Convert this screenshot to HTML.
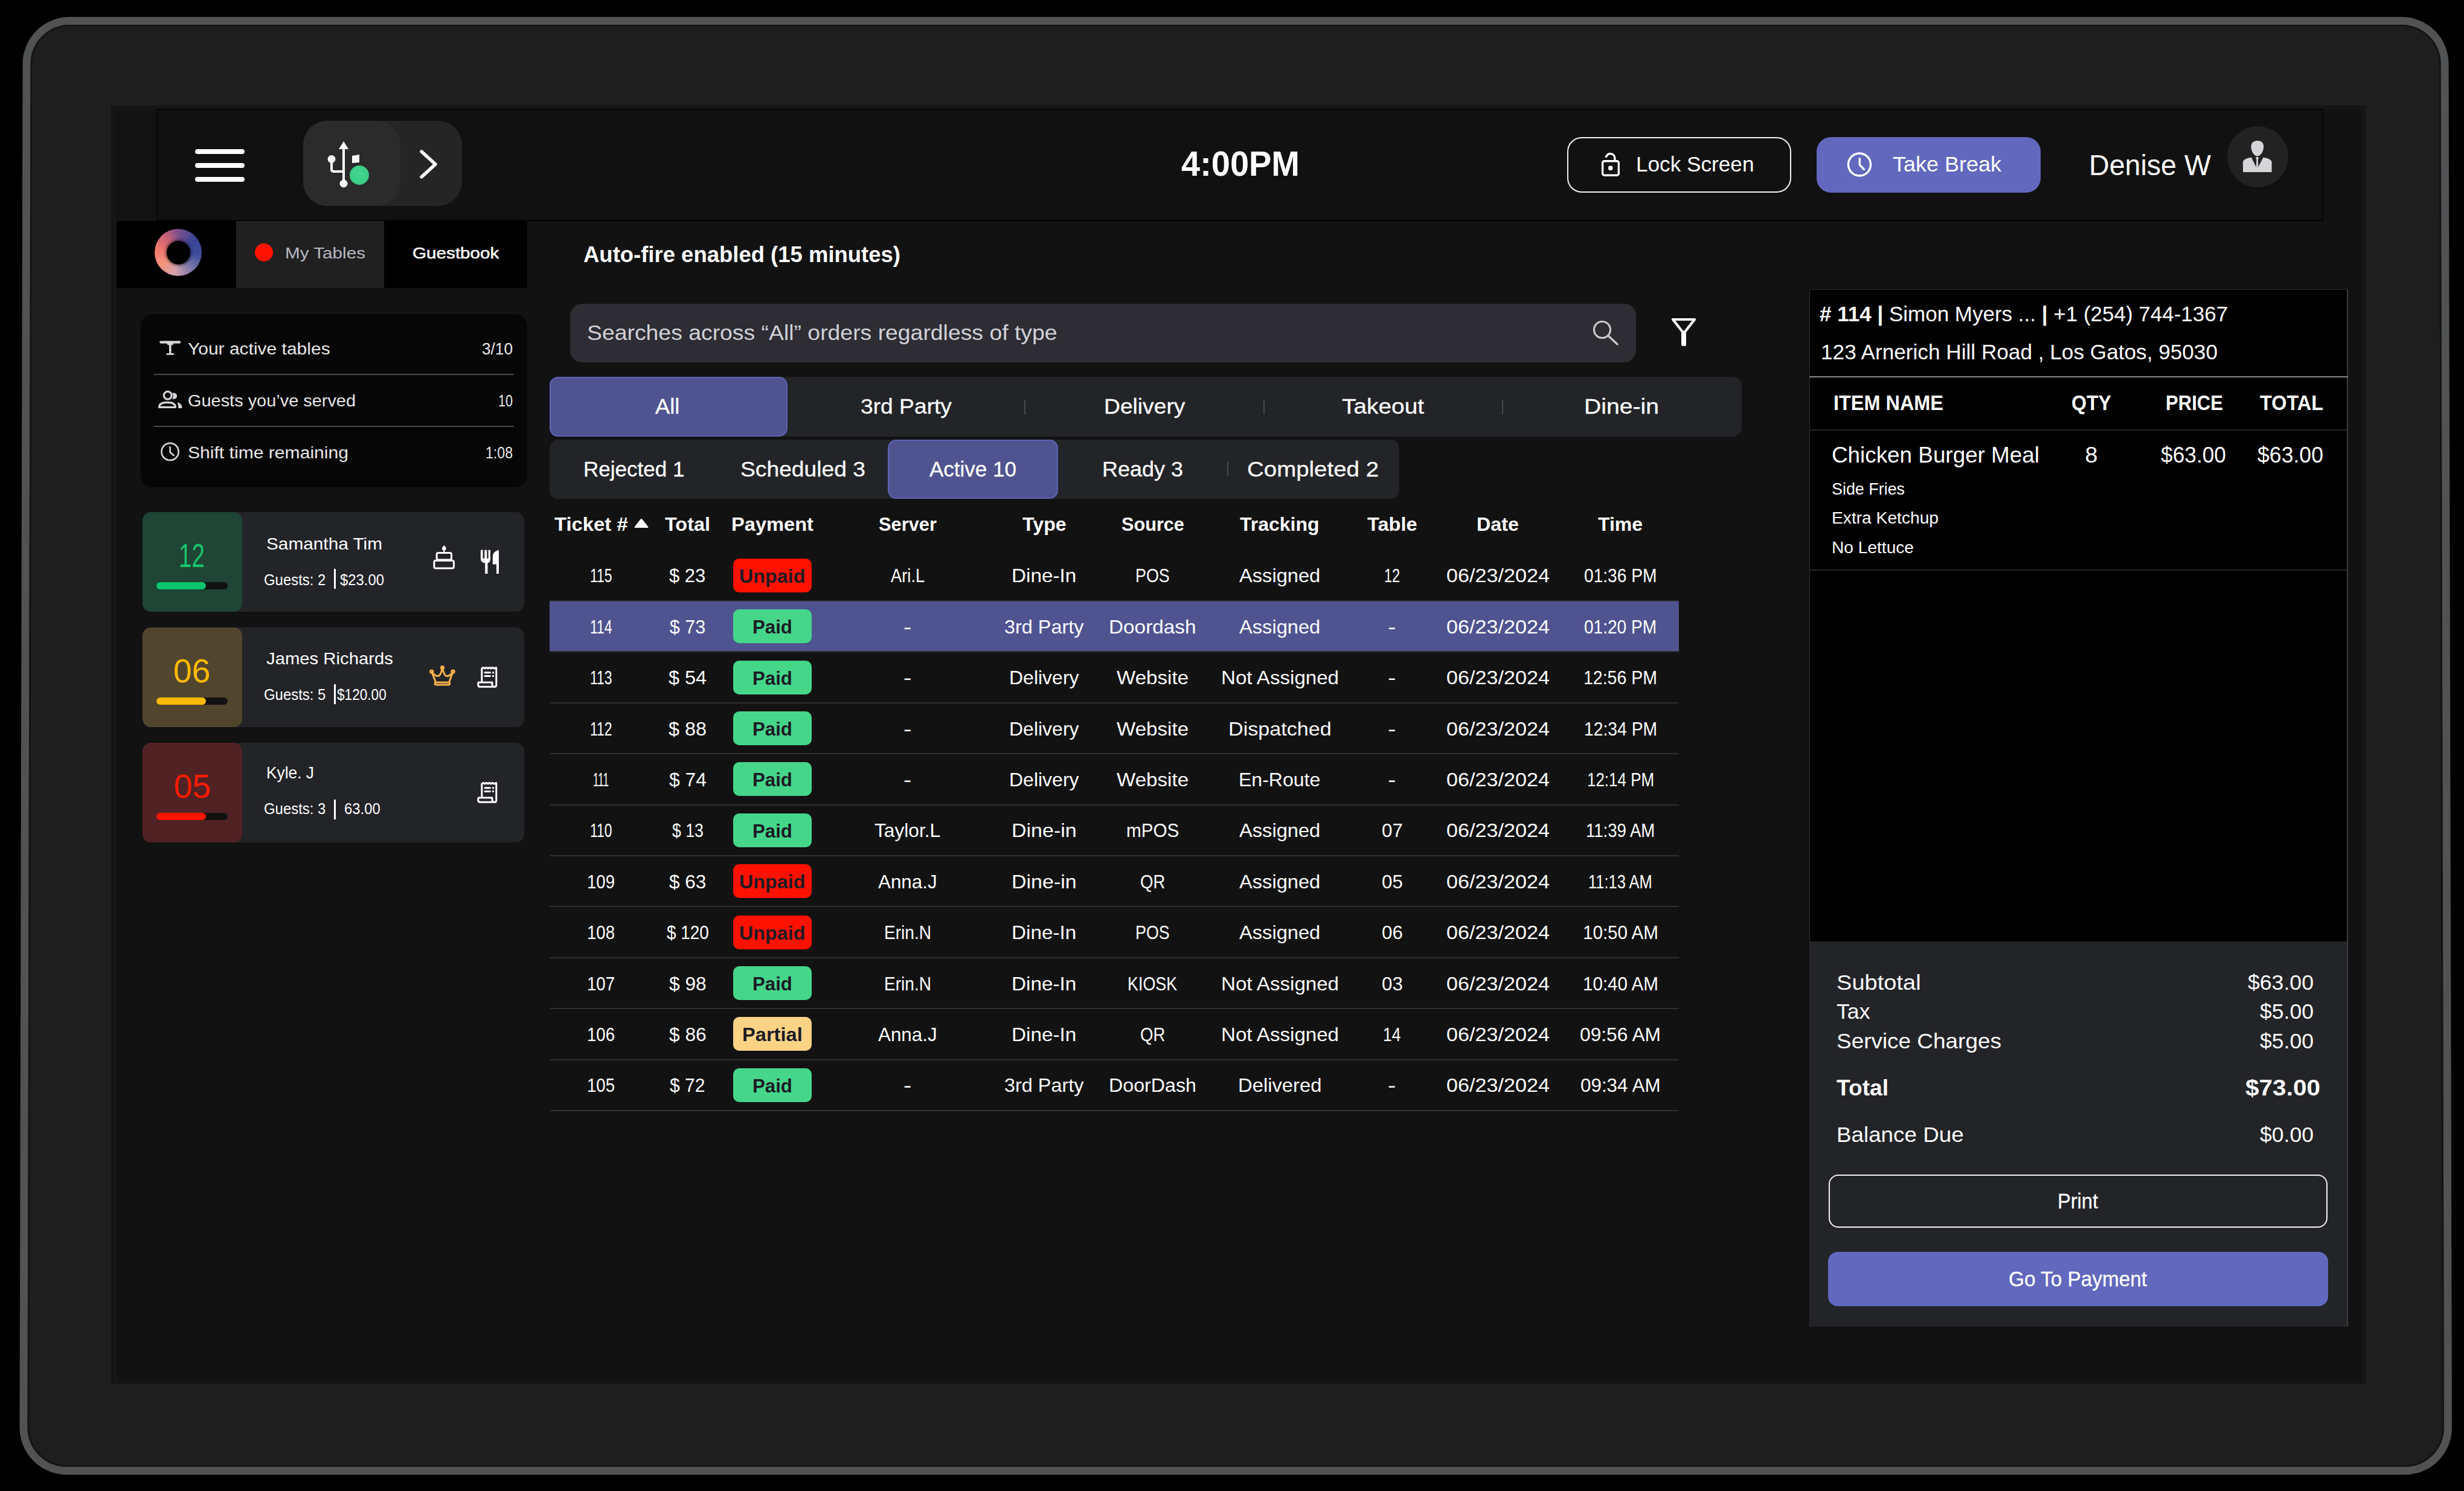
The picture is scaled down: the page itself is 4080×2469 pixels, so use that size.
<!DOCTYPE html>
<html><head><meta charset="utf-8"><title>Orders</title><style>*{margin:0;padding:0}
html,body{width:4080px;height:2469px;overflow:hidden;background:#000;font-family:"Liberation Sans",sans-serif}
.b{position:absolute}
.t{position:absolute;white-space:nowrap;line-height:1;transform-origin:0 0}
</style></head><body>
<svg class="b" style="left:0px;top:0px;" width="4080" height="2469" viewBox="0 0 4080 2469"><path d="M115.5 34.5 L3976.6 34.5 A71.5 71.5 0 0 1 4048.1 106.0 L4053.5 2364.0 A71.5 71.5 0 0 1 3982.0 2435.5 L110.5 2435.5 A71.5 71.5 0 0 1 39.0 2364.0 L44.0 106.0 A71.5 71.5 0 0 1 115.5 34.5 Z" fill="#1e1e1e" stroke="#505254" stroke-width="13"/><path d="M115.5 42.5 L3976.6 42.5 A63.5 63.5 0 0 1 4040.1 106.0 L4045.5 2364.0 A63.5 63.5 0 0 1 3982.0 2427.5 L110.5 2427.5 A63.5 63.5 0 0 1 47.0 2364.0 L52.0 106.0 A63.5 63.5 0 0 1 115.5 42.5 Z" fill="none" stroke="#151515" stroke-width="3"/></svg>
<div class="b" style="left:184px;top:175px;width:3733px;height:2117px;background:#141414;border-radius:0px;"></div>
<div class="b" style="left:190px;top:179px;width:3723px;height:2108px;background:#1b1b1b;border-radius:0px;"></div>
<div class="b" style="left:192px;top:180px;width:3720px;height:2106px;background:#121212;border-radius:0px;"></div>
<div class="b" style="left:191px;top:180px;width:69px;height:185px;background:#131313;border-radius:0px;"></div>
<div class="b" style="left:259px;top:180px;width:3588px;height:186px;background:#111111;border-radius:0px;box-sizing:border-box;border:2px solid #050505;"></div>
<div class="b" style="left:323px;top:247px;width:82px;height:8px;background:#fff;border-radius:4px;"></div>
<div class="b" style="left:323px;top:270px;width:82px;height:8px;background:#fff;border-radius:4px;"></div>
<div class="b" style="left:323px;top:293px;width:82px;height:8px;background:#fff;border-radius:4px;"></div>
<div class="b" style="left:502px;top:200px;width:263px;height:141px;background:#252525;border-radius:40px;"></div>
<div class="b" style="left:502px;top:200px;width:161px;height:141px;background:#2b2b2b;border-radius:40px;"></div>
<svg class="b" style="left:540px;top:228px;" width="75" height="92" viewBox="0 0 75 92"><path d="M29 11 L29 74" stroke="#fff" stroke-width="4" fill="none"/><path d="M29 6 L21 19 L37 19 Z" fill="#fff"/><circle cx="29" cy="76" r="6.5" fill="#fff"/><circle cx="9" cy="35.5" r="6.5" fill="#fff"/><path d="M9 39 L9 52 Q9 56 13 56 L29 56" stroke="#fff" stroke-width="4" fill="none"/><path d="M43 30 L55 28 L55 41 L43 42 Z" fill="#fff"/></svg>
<div class="b" style="left:579px;top:274px;width:32px;height:32px;border-radius:50%;background:radial-gradient(circle at 50% 45%,#44d692 0,#3ccf88 60%,#2fae73 100%);"></div>
<svg class="b" style="left:690px;top:244px;" width="40" height="56" viewBox="0 0 40 56"><path d="M8 7 L31 28 L8 49" stroke="#fff" stroke-width="5.5" fill="none" stroke-linecap="round" stroke-linejoin="round"/></svg>
<div class="t" style="left:1955.5px;top:241.7px;font-size:58px;color:#fff;font-weight:700;transform:scaleX(0.9650);">4:00PM</div>
<div class="b" style="left:2595px;top:227px;width:371px;height:92px;background:transparent;border-radius:24px;box-sizing:border-box;border:2px solid #f4f4f4;"></div>
<svg class="b" style="left:2648px;top:250px;" width="38" height="44" viewBox="0 0 38 44"><path d="M25.8 16 L25.8 11 A7.3 7.3 0 0 0 11.6 9.6" stroke="#fff" stroke-width="3.4" fill="none" stroke-linecap="round"/><rect x="5.6" y="16.7" width="26.7" height="23.5" rx="3" stroke="#fff" stroke-width="3.4" fill="none"/><circle cx="18.8" cy="28.4" r="3.8" fill="#fff"/></svg>
<div class="t" style="left:2709px;top:254.25px;font-size:35px;color:#fff;transform:scaleX(1.0046);">Lock Screen</div>
<div class="b" style="left:3008px;top:227px;width:371px;height:92px;background:#6168be;border-radius:24px;"></div>
<svg class="b" style="left:3056px;top:249px;" width="46" height="47" viewBox="0 0 46 47"><circle cx="23" cy="23.5" r="18.5" stroke="#fff" stroke-width="3.4" fill="none"/><path d="M23.3 13.7 L23.3 24 L30.5 31.5" stroke="#fff" stroke-width="3.4" fill="none" stroke-linecap="round"/></svg>
<div class="t" style="left:3134px;top:254.25px;font-size:35px;color:#fff;transform:scaleX(1.0274);">Take Break</div>
<div class="t" style="left:3459px;top:249.7px;font-size:48px;color:#fff;transform:scaleX(0.9707);">Denise W</div>
<div class="b" style="left:3688px;top:209px;width:101px;height:101px;border-radius:50%;background:#222222;"></div>
<svg class="b" style="left:3712px;top:232px;" width="52" height="56" viewBox="0 0 52 56"><path d="M26 1.1 C32.5 1.1 36.2 4.5 36.2 11 C36.2 19 31 26.5 25.8 26.5 C20.5 26.5 15.5 19 15.5 11 C15.5 4.5 19.5 1.1 26 1.1 Z" fill="#d4d5d9"/><path d="M2 53 L2 36.3 Q3 30.5 15.9 28.8 L23.7 44.3 L27.4 44.3 L35.5 28.8 Q48.6 30.5 49.6 36.3 L49.6 53 Z" fill="#d4d5d9"/><circle cx="25.6" cy="30.1" r="2.3" fill="#d4d5d9"/><path d="M24.4 31.5 L26.8 31.5 L27.4 44.3 L23.8 44.3 Z" fill="#d4d5d9"/></svg>
<div class="b" style="left:193px;top:366px;width:198px;height:111px;background:#000;border-radius:0px;"></div>
<div class="b" style="left:256px;top:379px;width:78px;height:78px;border-radius:50%;background:conic-gradient(from 0deg,#7b4f8c 0deg,#3c4496 50deg,#3d4c9c 95deg,#7a78ac 140deg,#d7a3ab 190deg,#f6927c 235deg,#f0786c 280deg,#c76078 325deg,#7b4f8c 360deg);"></div>
<div class="b" style="left:275.5px;top:398.5px;width:39px;height:39px;border-radius:50%;background:#000;box-shadow:0 0 4px 2px rgba(0,0,0,0.5);"></div>
<div class="b" style="left:391px;top:366px;width:245px;height:111px;background:#202020;border-radius:0px;"></div>
<div class="b" style="left:422px;top:403px;width:30px;height:30px;border-radius:50%;background:#ff1100;"></div>
<div class="t" style="left:472px;top:405.9px;font-size:26px;color:#b9b9c4;transform:scaleX(1.1407);">My Tables</div>
<div class="b" style="left:636px;top:366px;width:237px;height:111px;background:#000;border-radius:0px;"></div>
<div class="t" style="left:683px;top:406.23px;font-size:26.2px;color:#fff;transform:scaleX(1.1325);-webkit-text-stroke:0.5px #fff;">Guestbook</div>
<div class="b" style="left:233px;top:520px;width:640px;height:287px;background:#060606;border-radius:20px;"></div>
<svg class="b" style="left:262px;top:562px;" width="39" height="28" viewBox="0 0 39 28"><path d="M4.3 4.7 L35.2 4.7" stroke="#d6d6da" stroke-width="4.2" stroke-linecap="round"/><path d="M13.5 6 L26 6 L23.5 9.5 L16 9.5 Z" fill="#d6d6da"/><path d="M19.8 7 L19.8 24" stroke="#d6d6da" stroke-width="3.6"/><path d="M14.8 24.4 L24.8 24.4" stroke="#d6d6da" stroke-width="2.8" stroke-linecap="round"/></svg>
<div class="t" style="left:311px;top:565.05px;font-size:27px;color:#e8e8e8;transform:scaleX(1.1108);">Your active tables</div>
<div class="t" style="left:798px;top:565.05px;font-size:27px;color:#e8e8e8;transform:scaleX(0.9714);">3/10</div>
<div class="b" style="left:255px;top:619px;width:596px;height:2px;background:#4a4a4e;border-radius:0px;"></div>
<svg class="b" style="left:260px;top:646px;" width="43" height="32" viewBox="0 0 43 32"><circle cx="17.7" cy="8.8" r="6.4" stroke="#d6d6da" stroke-width="3.2" fill="none"/><path d="M3.6 28.4 Q3.6 20.4 17 20.4 Q30.4 20.4 30.4 28.4 Z" stroke="#d6d6da" stroke-width="3.2" fill="none" stroke-linejoin="round"/><path d="M25 4.2 Q33.2 4.5 33.2 9.8 Q33.2 15 25 15.2 Q28.3 9.8 25 4.2 Z" fill="#d6d6da"/><path d="M33.6 19.9 Q41.6 22 41.6 30 L35.5 30 Q35 24 33.6 19.9 Z" fill="#d6d6da"/></svg>
<div class="t" style="left:311px;top:651.05px;font-size:27px;color:#e8e8e8;transform:scaleX(1.0709);">Guests you’ve served</div>
<div class="t" style="left:825px;top:651.05px;font-size:27px;color:#e8e8e8;transform:scaleX(0.8000);">10</div>
<div class="b" style="left:255px;top:705px;width:596px;height:2px;background:#4a4a4e;border-radius:0px;"></div>
<svg class="b" style="left:264px;top:730px;" width="36" height="36" viewBox="0 0 36 36"><circle cx="17.6" cy="18" r="14.1" stroke="#d6d6da" stroke-width="2.6" fill="none"/><path d="M17.6 10.3 L17.6 18.7 L23.8 24.2" stroke="#d6d6da" stroke-width="2.6" fill="none" stroke-linecap="round" stroke-linejoin="round"/></svg>
<div class="t" style="left:311px;top:737.05px;font-size:27px;color:#e8e8e8;transform:scaleX(1.1148);">Shift time remaining</div>
<div class="t" style="left:804px;top:737.05px;font-size:27px;color:#e8e8e8;transform:scaleX(0.8571);">1:08</div>
<div class="b" style="left:236px;top:848px;width:632px;height:165px;background:#232428;border-radius:14px;"></div>
<div class="b" style="left:236px;top:848px;width:165px;height:165px;background:#1e4535;border-radius:14px;"></div>
<div class="t" style="left:296px;top:893.25px;font-size:55px;color:#18c46a;transform:scaleX(0.7026);">12</div>
<div class="b" style="left:259px;top:964px;width:118px;height:11.5px;background:#121212;border-radius:6px;"></div>
<div class="b" style="left:259px;top:964px;width:82px;height:11.5px;background:#05c46b;border-radius:6px;"></div>
<div class="t" style="left:441px;top:886.54px;font-size:27.6px;color:#fff;transform:scaleX(1.0793);">Samantha Tim</div>
<div class="t" style="left:436.5px;top:947.75px;font-size:25px;color:#fff;transform:scaleX(0.9561);">Guests: 2</div>
<div class="b" style="left:553px;top:942px;width:2.5px;height:33px;background:#fff;border-radius:0px;"></div>
<div class="t" style="left:563.4px;top:947.75px;font-size:25px;color:#fff;transform:scaleX(0.9556);">$23.00</div>
<div class="b" style="left:236px;top:1039px;width:632px;height:165px;background:#232428;border-radius:14px;"></div>
<div class="b" style="left:236px;top:1039px;width:165px;height:165px;background:#51462d;border-radius:14px;"></div>
<div class="t" style="left:287px;top:1084.25px;font-size:55px;color:#fdb900;transform:scaleX(1.0065);">06</div>
<div class="b" style="left:259px;top:1155px;width:118px;height:11.5px;background:#121212;border-radius:6px;"></div>
<div class="b" style="left:259px;top:1155px;width:82px;height:11.5px;background:#fdb900;border-radius:6px;"></div>
<div class="t" style="left:441px;top:1076.54px;font-size:27.6px;color:#fff;transform:scaleX(1.0611);">James Richards</div>
<div class="t" style="left:436.5px;top:1137.75px;font-size:25px;color:#fff;transform:scaleX(0.9561);">Guests: 5</div>
<div class="b" style="left:553px;top:1133px;width:2.5px;height:33px;background:#fff;border-radius:0px;"></div>
<div class="t" style="left:558px;top:1137.75px;font-size:25px;color:#fff;transform:scaleX(0.9049);">$120.00</div>
<div class="b" style="left:236px;top:1230px;width:632px;height:165px;background:#232428;border-radius:14px;"></div>
<div class="b" style="left:236px;top:1230px;width:165px;height:165px;background:#512224;border-radius:14px;"></div>
<div class="t" style="left:288.15px;top:1275.25px;font-size:55px;color:#ff1a00;transform:scaleX(1.0082);">05</div>
<div class="b" style="left:259px;top:1346px;width:118px;height:11.5px;background:#121212;border-radius:6px;"></div>
<div class="b" style="left:259px;top:1346px;width:82px;height:11.5px;background:#ff1400;border-radius:6px;"></div>
<div class="t" style="left:441px;top:1265.54px;font-size:27.6px;color:#fff;transform:scaleX(0.9541);">Kyle. J</div>
<div class="t" style="left:436.5px;top:1326.75px;font-size:25px;color:#fff;transform:scaleX(0.9561);">Guests: 3</div>
<div class="b" style="left:553px;top:1324px;width:2.5px;height:33px;background:#fff;border-radius:0px;"></div>
<div class="t" style="left:569.6px;top:1326.75px;font-size:25px;color:#fff;transform:scaleX(0.9537);">63.00</div>
<svg class="b" style="left:715px;top:900px;" width="41" height="46" viewBox="0 0 41 46"><path d="M20.3 3 Q24.3 6.8 23.6 9.3 Q22.8 11.6 20.3 11.6 Q17.8 11.6 17 9.3 Q16.3 6.8 20.3 3 Z" fill="#fff"/><rect x="19.2" y="10.5" width="2.2" height="5" fill="#fff"/><rect x="8.2" y="15.5" width="24.3" height="11.6" rx="2.5" stroke="#fff" stroke-width="3" fill="none"/><rect x="3.9" y="28.2" width="32.5" height="12.9" rx="2.5" stroke="#fff" stroke-width="3" fill="none"/></svg>
<svg class="b" style="left:793px;top:908px;" width="36" height="44" viewBox="0 0 36 44"><path d="M2.9 2.7 L6.6 2.7 L6.6 16.8 L9.3 16.8 L9.3 2.7 L13.3 2.7 L13.3 16.8 L15.6 16.8 L15.6 2.7 L19 2.7 L19 17 Q19 23.5 14.5 24.5 L14.5 42.1 L10.2 42.1 L10.2 24.5 Q2.9 23.5 2.9 17 Z" fill="#fff"/><path d="M22.8 26.6 L22.8 14 Q22.8 5 33 2.7 L33 42.1 L29 42.1 L29 26.6 Z" fill="#fff"/></svg>
<svg class="b" style="left:708px;top:1100px;" width="48" height="39" viewBox="0 0 48 39"><path d="M6.7 12.1 C10 17 13.5 20 17.5 19.5 C21 19 23 13 24.5 5.6 C26 13 28 19 31.5 19.5 C35.5 20 39 17 42.1 12.1" stroke="#f7b24a" stroke-width="3" fill="none" stroke-linejoin="round"/><path d="M6.7 12.1 L13.2 29 M42.1 12.1 L35.9 29" stroke="#f7b24a" stroke-width="3" fill="none"/><circle cx="24.5" cy="5.6" r="2.3" stroke="#f7b24a" stroke-width="2.8" fill="none"/><circle cx="6.7" cy="12.1" r="2.3" stroke="#f7b24a" stroke-width="2.8" fill="none"/><circle cx="42.1" cy="12.1" r="2.3" stroke="#f7b24a" stroke-width="2.8" fill="none"/><rect x="12.1" y="30.1" width="24.6" height="3.9" rx="2" stroke="#f7b24a" stroke-width="3" fill="none"/></svg>
<svg class="b" style="left:789px;top:1101px;" width="36" height="40" viewBox="0 0 36 40"><path d="M8.8 29 L8.8 6 L11.5 4.2 L14 6 L16.5 4.2 L19 6 L21.5 4.2 L24 6 L26.5 4.2 L29 6 L32.8 4.5 L32.8 33.5 Q32.8 36.2 30 36.2" stroke="#fff" stroke-width="3" fill="none" stroke-linejoin="round"/><path d="M30 36.2 L5.5 36.2 Q2.8 36.2 2.8 33 L2.8 30 Q2.8 29 4 29 L26 29 L26 33 Q26 36.2 30 36.2 Z" stroke="#fff" stroke-width="3" fill="none" stroke-linejoin="round"/><path d="M14 12.7 L22.5 12.7 M14 18.4 L22.5 18.4" stroke="#fff" stroke-width="3" stroke-linecap="round"/><circle cx="27.5" cy="12.7" r="1.7" fill="#fff"/><circle cx="27.5" cy="18.4" r="1.7" fill="#fff"/></svg>
<svg class="b" style="left:789px;top:1292px;" width="36" height="40" viewBox="0 0 36 40"><path d="M8.8 29 L8.8 6 L11.5 4.2 L14 6 L16.5 4.2 L19 6 L21.5 4.2 L24 6 L26.5 4.2 L29 6 L32.8 4.5 L32.8 33.5 Q32.8 36.2 30 36.2" stroke="#fff" stroke-width="3" fill="none" stroke-linejoin="round"/><path d="M30 36.2 L5.5 36.2 Q2.8 36.2 2.8 33 L2.8 30 Q2.8 29 4 29 L26 29 L26 33 Q26 36.2 30 36.2 Z" stroke="#fff" stroke-width="3" fill="none" stroke-linejoin="round"/><path d="M14 12.7 L22.5 12.7 M14 18.4 L22.5 18.4" stroke="#fff" stroke-width="3" stroke-linecap="round"/><circle cx="27.5" cy="12.7" r="1.7" fill="#fff"/><circle cx="27.5" cy="18.4" r="1.7" fill="#fff"/></svg>
<div class="t" style="left:966px;top:402.55px;font-size:37px;color:#fff;font-weight:700;transform:scaleX(0.9859);">Auto-fire enabled (15 minutes)</div>
<div class="b" style="left:944px;top:503px;width:1765px;height:97px;background:#2d2d33;border-radius:20px;"></div>
<div class="t" style="left:972px;top:533.25px;font-size:35px;color:#d2d2d8;transform:scaleX(1.0673);">Searches across “All” orders regardless of type</div>
<svg class="b" style="left:2634px;top:527px;" width="50" height="48" viewBox="0 0 50 48"><circle cx="19" cy="19" r="13.5" stroke="#c9c9cc" stroke-width="3.2" fill="none"/><path d="M29 29 L44 43" stroke="#c9c9cc" stroke-width="3.4" stroke-linecap="round"/></svg>
<svg class="b" style="left:2764px;top:523px;" width="48" height="54" viewBox="0 0 48 54"><path d="M6 6 L42 6 L24 29 Z" stroke="#fff" stroke-width="4.2" fill="none" stroke-linejoin="round"/><rect x="20" y="27" width="8" height="23" rx="2.5" fill="#fff"/></svg>
<div class="b" style="left:910px;top:624px;width:1974px;height:99px;background:#232428;border-radius:14px;"></div>
<div class="b" style="left:910px;top:624px;width:394px;height:99px;background:#4f5491;border-radius:14px;box-sizing:border-box;border:2px solid #5d63b5;"></div>
<div class="t" style="left:1084.89px;top:655.67px;font-size:34.5px;color:#fff;transform:scaleX(1.0500);-webkit-text-stroke:0.3px #fff;">All</div>
<div class="t" style="left:1424.5px;top:655.67px;font-size:34.5px;color:#fff;transform:scaleX(1.0786);-webkit-text-stroke:0.3px #fff;">3rd Party</div>
<div class="t" style="left:1827.8px;top:655.67px;font-size:34.5px;color:#fff;transform:scaleX(1.0787);-webkit-text-stroke:0.3px #fff;">Delivery</div>
<div class="t" style="left:2222px;top:655.67px;font-size:34.5px;color:#fff;transform:scaleX(1.1258);-webkit-text-stroke:0.3px #fff;">Takeout</div>
<div class="t" style="left:2623px;top:655.67px;font-size:34.5px;color:#fff;transform:scaleX(1.1345);-webkit-text-stroke:0.3px #fff;">Dine-in</div>
<div class="b" style="left:1696px;top:663px;width:2px;height:23px;background:#4a4b50;border-radius:0px;"></div>
<div class="b" style="left:2092px;top:663px;width:2px;height:23px;background:#4a4b50;border-radius:0px;"></div>
<div class="b" style="left:2487px;top:663px;width:2px;height:23px;background:#4a4b50;border-radius:0px;"></div>
<div class="b" style="left:910px;top:728px;width:1407px;height:98px;background:#232428;border-radius:14px;"></div>
<div class="b" style="left:1470px;top:728px;width:282px;height:98px;background:#4f5491;border-radius:14px;box-sizing:border-box;border:2px solid #5d63b5;"></div>
<div class="t" style="left:966.35px;top:759.67px;font-size:34.5px;color:#fff;transform:scaleX(1.0146);-webkit-text-stroke:0.3px #fff;">Rejected 1</div>
<div class="t" style="left:1226px;top:759.67px;font-size:34.5px;color:#fff;transform:scaleX(1.0792);-webkit-text-stroke:0.3px #fff;">Scheduled 3</div>
<div class="t" style="left:1539px;top:759.67px;font-size:34.5px;color:#fff;transform:scaleX(1.0148);-webkit-text-stroke:0.3px #fff;">Active 10</div>
<div class="t" style="left:1825px;top:759.67px;font-size:34.5px;color:#fff;transform:scaleX(1.0428);-webkit-text-stroke:0.3px #fff;">Ready 3</div>
<div class="t" style="left:2065px;top:759.67px;font-size:34.5px;color:#fff;transform:scaleX(1.1145);-webkit-text-stroke:0.3px #fff;">Completed 2</div>
<div class="b" style="left:2032px;top:765px;width:2px;height:23px;background:#4a4b50;border-radius:0px;"></div>
<div class="t" style="left:918px;top:853.05px;font-size:31.7px;color:#fff;font-weight:700;transform:scaleX(1.0357);">Ticket #</div>
<svg class="b" style="left:1049px;top:857px;" width="26" height="19" viewBox="0 0 26 19"><path d="M13 2 Q14 2 15 3.5 L24 15 Q25 17 23 17 L3 17 Q1 17 2 15 L11 3.5 Q12 2 13 2 Z" fill="#fff"/></svg>
<div class="t" style="left:1101px;top:853.05px;font-size:31.7px;color:#fff;font-weight:700;transform:scaleX(1.0218);">Total</div>
<div class="t" style="left:1211px;top:853.05px;font-size:31.7px;color:#fff;font-weight:700;transform:scaleX(1.0295);">Payment</div>
<div class="t" style="left:1455px;top:853.05px;font-size:31.7px;color:#fff;font-weight:700;transform:scaleX(0.9726);">Server</div>
<div class="t" style="left:1692.65px;top:853.05px;font-size:31.7px;color:#fff;font-weight:700;transform:scaleX(1.0154);">Type</div>
<div class="t" style="left:1856.5px;top:853.05px;font-size:31.7px;color:#fff;font-weight:700;transform:scaleX(0.9674);">Source</div>
<div class="t" style="left:2053.25px;top:853.05px;font-size:31.7px;color:#fff;font-weight:700;transform:scaleX(1.0084);">Tracking</div>
<div class="t" style="left:2263.7px;top:853.05px;font-size:31.7px;color:#fff;font-weight:700;transform:scaleX(1.0274);">Table</div>
<div class="t" style="left:2445px;top:853.05px;font-size:31.7px;color:#fff;font-weight:700;transform:scaleX(1.0189);">Date</div>
<div class="t" style="left:2646px;top:853.05px;font-size:31.7px;color:#fff;font-weight:700;transform:scaleX(1.0082);">Time</div>
<div class="b" style="left:910px;top:994px;width:1870px;height:2px;background:#2e2f33;border-radius:0px;"></div>
<div class="t" style="left:976.75px;top:938.38px;font-size:30.5px;color:#fff;transform:scaleX(0.7510);">115</div>
<div class="t" style="left:1108.35px;top:938.38px;font-size:30.5px;color:#fff;transform:scaleX(1.0152);">$ 23</div>
<div class="b" style="left:1214px;top:924.8px;width:130px;height:56px;background:#ff1100;border-radius:10px;"></div>
<div class="t" style="left:1224.3px;top:938.88px;font-size:30.5px;color:#1c1a24;font-weight:700;transform:scaleX(1.0580);">Unpaid</div>
<div class="t" style="left:1474.9px;top:938.38px;font-size:30.5px;color:#fff;transform:scaleX(0.8963);">Ari.L</div>
<div class="t" style="left:1675.35px;top:938.38px;font-size:30.5px;color:#fff;transform:scaleX(1.0916);">Dine-In</div>
<div class="t" style="left:1880.15px;top:938.38px;font-size:30.5px;color:#fff;transform:scaleX(0.8804);">POS</div>
<div class="t" style="left:2051.85px;top:938.38px;font-size:30.5px;color:#fff;transform:scaleX(1.0701);">Assigned</div>
<div class="t" style="left:2291.9px;top:938.38px;font-size:30.5px;color:#fff;transform:scaleX(0.7729);">12</div>
<div class="t" style="left:2394.5px;top:938.38px;font-size:30.5px;color:#fff;transform:scaleX(1.1206);">06/23/2024</div>
<div class="t" style="left:2622.85px;top:938.38px;font-size:30.5px;color:#fff;transform:scaleX(0.9218);">01:36 PM</div>
<div class="b" style="left:910px;top:996px;width:1870px;height:83.4px;background:#4f5490;border-radius:0px;"></div>
<div class="b" style="left:910px;top:1078.4px;width:1870px;height:2px;background:#2e2f33;border-radius:0px;"></div>
<div class="t" style="left:976.75px;top:1022.78px;font-size:30.5px;color:#fff;transform:scaleX(0.7510);">114</div>
<div class="t" style="left:1108.75px;top:1022.78px;font-size:30.5px;color:#fff;">$ 73</div>
<div class="b" style="left:1214px;top:1009.2px;width:130px;height:56px;background:#45d68a;border-radius:10px;"></div>
<div class="t" style="left:1246.05px;top:1023.28px;font-size:30.5px;color:#1c1a24;font-weight:700;transform:scaleX(1.0233);">Paid</div>
<div class="t" style="left:1496.3px;top:1022.78px;font-size:30.5px;color:#fff;transform:scaleX(1.3137);">-</div>
<div class="t" style="left:1663.25px;top:1022.78px;font-size:30.5px;color:#fff;transform:scaleX(1.0631);">3rd Party</div>
<div class="t" style="left:1836.25px;top:1022.78px;font-size:30.5px;color:#fff;transform:scaleX(1.0930);">Doordash</div>
<div class="t" style="left:2051.85px;top:1022.78px;font-size:30.5px;color:#fff;transform:scaleX(1.0701);">Assigned</div>
<div class="t" style="left:2298.3px;top:1022.78px;font-size:30.5px;color:#fff;transform:scaleX(1.3137);">-</div>
<div class="t" style="left:2394.5px;top:1022.78px;font-size:30.5px;color:#fff;transform:scaleX(1.1206);">06/23/2024</div>
<div class="t" style="left:2623px;top:1022.78px;font-size:30.5px;color:#fff;transform:scaleX(0.9195);">01:20 PM</div>
<div class="b" style="left:910px;top:1162.8px;width:1870px;height:2px;background:#2e2f33;border-radius:0px;"></div>
<div class="t" style="left:976.75px;top:1107.18px;font-size:30.5px;color:#fff;transform:scaleX(0.7510);">113</div>
<div class="t" style="left:1106.9px;top:1107.18px;font-size:30.5px;color:#fff;transform:scaleX(1.0640);">$ 54</div>
<div class="b" style="left:1214px;top:1093.6px;width:130px;height:56px;background:#45d68a;border-radius:10px;"></div>
<div class="t" style="left:1246.05px;top:1107.68px;font-size:30.5px;color:#1c1a24;font-weight:700;transform:scaleX(1.0233);">Paid</div>
<div class="t" style="left:1496.3px;top:1107.18px;font-size:30.5px;color:#fff;transform:scaleX(1.3137);">-</div>
<div class="t" style="left:1671.2px;top:1107.18px;font-size:30.5px;color:#fff;transform:scaleX(1.0490);">Delivery</div>
<div class="t" style="left:1848.95px;top:1107.18px;font-size:30.5px;color:#fff;transform:scaleX(1.0867);">Website</div>
<div class="t" style="left:2021.5px;top:1107.18px;font-size:30.5px;color:#fff;transform:scaleX(1.0851);">Not Assigned</div>
<div class="t" style="left:2298.3px;top:1107.18px;font-size:30.5px;color:#fff;transform:scaleX(1.3137);">-</div>
<div class="t" style="left:2394.5px;top:1107.18px;font-size:30.5px;color:#fff;transform:scaleX(1.1206);">06/23/2024</div>
<div class="t" style="left:2622.1px;top:1107.18px;font-size:30.5px;color:#fff;transform:scaleX(0.9333);">12:56 PM</div>
<div class="b" style="left:910px;top:1247.2px;width:1870px;height:2px;background:#2e2f33;border-radius:0px;"></div>
<div class="t" style="left:976.75px;top:1191.58px;font-size:30.5px;color:#fff;transform:scaleX(0.7510);">112</div>
<div class="t" style="left:1107px;top:1191.58px;font-size:30.5px;color:#fff;transform:scaleX(1.0606);">$ 88</div>
<div class="b" style="left:1214px;top:1178px;width:130px;height:56px;background:#45d68a;border-radius:10px;"></div>
<div class="t" style="left:1246.05px;top:1192.08px;font-size:30.5px;color:#1c1a24;font-weight:700;transform:scaleX(1.0233);">Paid</div>
<div class="t" style="left:1496.3px;top:1191.58px;font-size:30.5px;color:#fff;transform:scaleX(1.3137);">-</div>
<div class="t" style="left:1671.2px;top:1191.58px;font-size:30.5px;color:#fff;transform:scaleX(1.0490);">Delivery</div>
<div class="t" style="left:1848.95px;top:1191.58px;font-size:30.5px;color:#fff;transform:scaleX(1.0867);">Website</div>
<div class="t" style="left:2033.65px;top:1191.58px;font-size:30.5px;color:#fff;transform:scaleX(1.1186);">Dispatched</div>
<div class="t" style="left:2298.3px;top:1191.58px;font-size:30.5px;color:#fff;transform:scaleX(1.3137);">-</div>
<div class="t" style="left:2394.5px;top:1191.58px;font-size:30.5px;color:#fff;transform:scaleX(1.1206);">06/23/2024</div>
<div class="t" style="left:2622.5px;top:1191.58px;font-size:30.5px;color:#fff;transform:scaleX(0.9272);">12:34 PM</div>
<div class="b" style="left:910px;top:1331.6px;width:1870px;height:2px;background:#2e2f33;border-radius:0px;"></div>
<div class="t" style="left:982px;top:1275.98px;font-size:30.5px;color:#fff;transform:scaleX(0.5603);">111</div>
<div class="t" style="left:1107.5px;top:1275.98px;font-size:30.5px;color:#fff;transform:scaleX(1.0438);">$ 74</div>
<div class="b" style="left:1214px;top:1262.4px;width:130px;height:56px;background:#45d68a;border-radius:10px;"></div>
<div class="t" style="left:1246.05px;top:1276.48px;font-size:30.5px;color:#1c1a24;font-weight:700;transform:scaleX(1.0233);">Paid</div>
<div class="t" style="left:1496.3px;top:1275.98px;font-size:30.5px;color:#fff;transform:scaleX(1.3137);">-</div>
<div class="t" style="left:1671.2px;top:1275.98px;font-size:30.5px;color:#fff;transform:scaleX(1.0490);">Delivery</div>
<div class="t" style="left:1848.95px;top:1275.98px;font-size:30.5px;color:#fff;transform:scaleX(1.0867);">Website</div>
<div class="t" style="left:2051.35px;top:1275.98px;font-size:30.5px;color:#fff;transform:scaleX(1.0497);">En-Route</div>
<div class="t" style="left:2298.3px;top:1275.98px;font-size:30.5px;color:#fff;transform:scaleX(1.3137);">-</div>
<div class="t" style="left:2394.5px;top:1275.98px;font-size:30.5px;color:#fff;transform:scaleX(1.1206);">06/23/2024</div>
<div class="t" style="left:2627.5px;top:1275.98px;font-size:30.5px;color:#fff;transform:scaleX(0.8506);">12:14 PM</div>
<div class="b" style="left:910px;top:1416px;width:1870px;height:2px;background:#2e2f33;border-radius:0px;"></div>
<div class="t" style="left:976.75px;top:1360.38px;font-size:30.5px;color:#fff;transform:scaleX(0.7510);">110</div>
<div class="t" style="left:1112.55px;top:1360.38px;font-size:30.5px;color:#fff;transform:scaleX(0.8737);">$ 13</div>
<div class="b" style="left:1214px;top:1346.8px;width:130px;height:56px;background:#45d68a;border-radius:10px;"></div>
<div class="t" style="left:1246.05px;top:1360.88px;font-size:30.5px;color:#1c1a24;font-weight:700;transform:scaleX(1.0233);">Paid</div>
<div class="t" style="left:1448.4px;top:1360.38px;font-size:30.5px;color:#fff;transform:scaleX(1.0390);">Taylor.L</div>
<div class="t" style="left:1675.15px;top:1360.38px;font-size:30.5px;color:#fff;transform:scaleX(1.1149);">Dine-in</div>
<div class="t" style="left:1864.8px;top:1360.38px;font-size:30.5px;color:#fff;transform:scaleX(0.9733);">mPOS</div>
<div class="t" style="left:2051.85px;top:1360.38px;font-size:30.5px;color:#fff;transform:scaleX(1.0701);">Assigned</div>
<div class="t" style="left:2287.6px;top:1360.38px;font-size:30.5px;color:#fff;transform:scaleX(1.0265);">07</div>
<div class="t" style="left:2394.5px;top:1360.38px;font-size:30.5px;color:#fff;transform:scaleX(1.1206);">06/23/2024</div>
<div class="t" style="left:2625.85px;top:1360.38px;font-size:30.5px;color:#fff;transform:scaleX(0.9028);">11:39 AM</div>
<div class="b" style="left:910px;top:1500.4px;width:1870px;height:2px;background:#2e2f33;border-radius:0px;"></div>
<div class="t" style="left:972px;top:1444.78px;font-size:30.5px;color:#fff;transform:scaleX(0.9037);">109</div>
<div class="t" style="left:1107.8px;top:1444.78px;font-size:30.5px;color:#fff;transform:scaleX(1.0337);">$ 63</div>
<div class="b" style="left:1214px;top:1431.2px;width:130px;height:56px;background:#ff1100;border-radius:10px;"></div>
<div class="t" style="left:1224.3px;top:1445.28px;font-size:30.5px;color:#1c1a24;font-weight:700;transform:scaleX(1.0580);">Unpaid</div>
<div class="t" style="left:1454.15px;top:1444.78px;font-size:30.5px;color:#fff;transform:scaleX(1.0284);">Anna.J</div>
<div class="t" style="left:1675.15px;top:1444.78px;font-size:30.5px;color:#fff;transform:scaleX(1.1149);">Dine-in</div>
<div class="t" style="left:1887.8px;top:1444.78px;font-size:30.5px;color:#fff;transform:scaleX(0.9039);">QR</div>
<div class="t" style="left:2051.85px;top:1444.78px;font-size:30.5px;color:#fff;transform:scaleX(1.0701);">Assigned</div>
<div class="t" style="left:2287.6px;top:1444.78px;font-size:30.5px;color:#fff;transform:scaleX(1.0265);">05</div>
<div class="t" style="left:2394.5px;top:1444.78px;font-size:30.5px;color:#fff;transform:scaleX(1.1206);">06/23/2024</div>
<div class="t" style="left:2630.15px;top:1444.78px;font-size:30.5px;color:#fff;transform:scaleX(0.8349);">11:13 AM</div>
<div class="b" style="left:910px;top:1584.8px;width:1870px;height:2px;background:#2e2f33;border-radius:0px;"></div>
<div class="t" style="left:972px;top:1529.18px;font-size:30.5px;color:#fff;transform:scaleX(0.9037);">108</div>
<div class="t" style="left:1103.6px;top:1529.18px;font-size:30.5px;color:#fff;transform:scaleX(0.9148);">$ 120</div>
<div class="b" style="left:1214px;top:1515.6px;width:130px;height:56px;background:#ff1100;border-radius:10px;"></div>
<div class="t" style="left:1224.3px;top:1529.68px;font-size:30.5px;color:#1c1a24;font-weight:700;transform:scaleX(1.0580);">Unpaid</div>
<div class="t" style="left:1464px;top:1529.18px;font-size:30.5px;color:#fff;transform:scaleX(0.9209);">Erin.N</div>
<div class="t" style="left:1675.35px;top:1529.18px;font-size:30.5px;color:#fff;transform:scaleX(1.0916);">Dine-In</div>
<div class="t" style="left:1880.15px;top:1529.18px;font-size:30.5px;color:#fff;transform:scaleX(0.8804);">POS</div>
<div class="t" style="left:2051.85px;top:1529.18px;font-size:30.5px;color:#fff;transform:scaleX(1.0701);">Assigned</div>
<div class="t" style="left:2287.6px;top:1529.18px;font-size:30.5px;color:#fff;transform:scaleX(1.0265);">06</div>
<div class="t" style="left:2394.5px;top:1529.18px;font-size:30.5px;color:#fff;transform:scaleX(1.1206);">06/23/2024</div>
<div class="t" style="left:2620.5px;top:1529.18px;font-size:30.5px;color:#fff;transform:scaleX(0.9697);">10:50 AM</div>
<div class="b" style="left:910px;top:1669.2px;width:1870px;height:2px;background:#2e2f33;border-radius:0px;"></div>
<div class="t" style="left:972px;top:1613.58px;font-size:30.5px;color:#fff;transform:scaleX(0.9037);">107</div>
<div class="t" style="left:1107.65px;top:1613.58px;font-size:30.5px;color:#fff;transform:scaleX(1.0387);">$ 98</div>
<div class="b" style="left:1214px;top:1600px;width:130px;height:56px;background:#45d68a;border-radius:10px;"></div>
<div class="t" style="left:1246.05px;top:1614.08px;font-size:30.5px;color:#1c1a24;font-weight:700;transform:scaleX(1.0233);">Paid</div>
<div class="t" style="left:1464px;top:1613.58px;font-size:30.5px;color:#fff;transform:scaleX(0.9209);">Erin.N</div>
<div class="t" style="left:1675.35px;top:1613.58px;font-size:30.5px;color:#fff;transform:scaleX(1.0916);">Dine-In</div>
<div class="t" style="left:1867.4px;top:1613.58px;font-size:30.5px;color:#fff;transform:scaleX(0.8820);">KIOSK</div>
<div class="t" style="left:2021.5px;top:1613.58px;font-size:30.5px;color:#fff;transform:scaleX(1.0851);">Not Assigned</div>
<div class="t" style="left:2287.6px;top:1613.58px;font-size:30.5px;color:#fff;transform:scaleX(1.0265);">03</div>
<div class="t" style="left:2394.5px;top:1613.58px;font-size:30.5px;color:#fff;transform:scaleX(1.1206);">06/23/2024</div>
<div class="t" style="left:2620.5px;top:1613.58px;font-size:30.5px;color:#fff;transform:scaleX(0.9697);">10:40 AM</div>
<div class="b" style="left:910px;top:1753.6px;width:1870px;height:2px;background:#2e2f33;border-radius:0px;"></div>
<div class="t" style="left:972px;top:1697.98px;font-size:30.5px;color:#fff;transform:scaleX(0.9037);">106</div>
<div class="t" style="left:1107.65px;top:1697.98px;font-size:30.5px;color:#fff;transform:scaleX(1.0387);">$ 86</div>
<div class="b" style="left:1214px;top:1684.4px;width:130px;height:56px;background:#fcd385;border-radius:10px;"></div>
<div class="t" style="left:1229.15px;top:1698.48px;font-size:30.5px;color:#1c1a24;font-weight:700;transform:scaleX(1.0697);">Partial</div>
<div class="t" style="left:1454.15px;top:1697.98px;font-size:30.5px;color:#fff;transform:scaleX(1.0284);">Anna.J</div>
<div class="t" style="left:1675.35px;top:1697.98px;font-size:30.5px;color:#fff;transform:scaleX(1.0916);">Dine-In</div>
<div class="t" style="left:1887.8px;top:1697.98px;font-size:30.5px;color:#fff;transform:scaleX(0.9039);">QR</div>
<div class="t" style="left:2021.5px;top:1697.98px;font-size:30.5px;color:#fff;transform:scaleX(1.0851);">Not Assigned</div>
<div class="t" style="left:2290.25px;top:1697.98px;font-size:30.5px;color:#fff;transform:scaleX(0.8702);">14</div>
<div class="t" style="left:2394.5px;top:1697.98px;font-size:30.5px;color:#fff;transform:scaleX(1.1206);">06/23/2024</div>
<div class="t" style="left:2616px;top:1697.98px;font-size:30.5px;color:#fff;transform:scaleX(1.0396);">09:56 AM</div>
<div class="b" style="left:910px;top:1838px;width:1870px;height:2px;background:#2e2f33;border-radius:0px;"></div>
<div class="t" style="left:972px;top:1782.38px;font-size:30.5px;color:#fff;transform:scaleX(0.9037);">105</div>
<div class="t" style="left:1109.3px;top:1782.38px;font-size:30.5px;color:#fff;transform:scaleX(0.9832);">$ 72</div>
<div class="b" style="left:1214px;top:1768.8px;width:130px;height:56px;background:#45d68a;border-radius:10px;"></div>
<div class="t" style="left:1246.05px;top:1782.88px;font-size:30.5px;color:#1c1a24;font-weight:700;transform:scaleX(1.0233);">Paid</div>
<div class="t" style="left:1496.3px;top:1782.38px;font-size:30.5px;color:#fff;transform:scaleX(1.3137);">-</div>
<div class="t" style="left:1663.25px;top:1782.38px;font-size:30.5px;color:#fff;transform:scaleX(1.0631);">3rd Party</div>
<div class="t" style="left:1836.05px;top:1782.38px;font-size:30.5px;color:#fff;transform:scaleX(1.0554);">DoorDash</div>
<div class="t" style="left:2049.8px;top:1782.38px;font-size:30.5px;color:#fff;transform:scaleX(1.0745);">Delivered</div>
<div class="t" style="left:2298.3px;top:1782.38px;font-size:30.5px;color:#fff;transform:scaleX(1.3137);">-</div>
<div class="t" style="left:2394.5px;top:1782.38px;font-size:30.5px;color:#fff;transform:scaleX(1.1206);">06/23/2024</div>
<div class="t" style="left:2616.7px;top:1782.38px;font-size:30.5px;color:#fff;transform:scaleX(1.0287);">09:34 AM</div>
<div class="b" style="left:2996px;top:479px;width:892px;height:1718px;background:#000;border-radius:0px;box-sizing:border-box;border:1px solid #2a2a2c;border-right:2px solid #3c3c40;"></div>
<div class="t" style="left:3013px;top:502px;font-size:35px;color:#fff;transform:scaleX(1.0);transform-origin:0 0;"><b>#&nbsp;114&nbsp;|</b> Simon Myers ... <b>|</b> +1 (254) 744-1367</div>
<div class="t" style="left:3015px;top:564.85px;font-size:35px;color:#fff;transform:scaleX(1.0050);">123 Arnerich Hill Road , Los Gatos, 95030</div>
<div class="b" style="left:2996px;top:623px;width:892px;height:2px;background:#8a8a8e;border-radius:0px;"></div>
<div class="t" style="left:3036px;top:649.25px;font-size:35px;color:#fff;font-weight:700;transform:scaleX(0.9267);">ITEM NAME</div>
<div class="t" style="left:3430px;top:649.25px;font-size:35px;color:#fff;font-weight:700;transform:scaleX(0.9179);">QTY</div>
<div class="t" style="left:3585.5px;top:649.25px;font-size:35px;color:#fff;font-weight:700;transform:scaleX(0.8879);">PRICE</div>
<div class="t" style="left:3742px;top:649.25px;font-size:35px;color:#fff;font-weight:700;transform:scaleX(0.9259);">TOTAL</div>
<div class="b" style="left:2997px;top:711px;width:889px;height:2px;background:#26262a;border-radius:0px;"></div>
<div class="t" style="left:3033px;top:735.12px;font-size:37.5px;color:#fff;transform:scaleX(0.9823);">Chicken Burger Meal</div>
<div class="t" style="left:3452.55px;top:735.12px;font-size:37.5px;color:#fff;">8</div>
<div class="t" style="left:3578px;top:735.12px;font-size:37.5px;color:#fff;transform:scaleX(0.9416);">$63.00</div>
<div class="t" style="left:3738px;top:735.12px;font-size:37.5px;color:#fff;transform:scaleX(0.9503);">$63.00</div>
<div class="t" style="left:3033px;top:797.05px;font-size:27px;color:#fff;transform:scaleX(0.9959);">Side Fries</div>
<div class="t" style="left:3033px;top:845.05px;font-size:27px;color:#fff;transform:scaleX(1.0436);">Extra Ketchup</div>
<div class="t" style="left:3033px;top:893.55px;font-size:27px;color:#fff;transform:scaleX(1.0413);">No Lettuce</div>
<div class="b" style="left:2997px;top:943px;width:889px;height:2px;background:#26262a;border-radius:0px;"></div>
<div class="b" style="left:2997px;top:1559px;width:889px;height:638px;background:#232428;border-radius:0px;"></div>
<div class="t" style="left:3040.5px;top:1608.75px;font-size:35px;color:#fff;transform:scaleX(1.0872);">Subtotal</div>
<div class="t" style="left:3721.6px;top:1608.75px;font-size:35px;color:#fff;transform:scaleX(1.0177);">$63.00</div>
<div class="t" style="left:3040.5px;top:1657.25px;font-size:35px;color:#fff;transform:scaleX(1.0183);">Tax</div>
<div class="t" style="left:3741.6px;top:1657.25px;font-size:35px;color:#fff;transform:scaleX(1.0160);">$5.00</div>
<div class="t" style="left:3040.5px;top:1706.25px;font-size:35px;color:#fff;transform:scaleX(1.0549);">Service Charges</div>
<div class="t" style="left:3741.6px;top:1706.25px;font-size:35px;color:#fff;transform:scaleX(1.0160);">$5.00</div>
<div class="t" style="left:3040.5px;top:1861.25px;font-size:35px;color:#fff;transform:scaleX(1.0509);">Balance Due</div>
<div class="t" style="left:3741.6px;top:1861.25px;font-size:35px;color:#fff;transform:scaleX(1.0160);">$0.00</div>
<div class="t" style="left:3040.5px;top:1783.12px;font-size:37.5px;color:#fff;font-weight:700;transform:scaleX(0.9908);">Total</div>
<div class="t" style="left:3718px;top:1783.12px;font-size:37.5px;color:#fff;font-weight:700;transform:scaleX(1.0811);">$73.00</div>
<div class="b" style="left:3028px;top:1945px;width:826px;height:88px;background:transparent;border-radius:16px;box-sizing:border-box;border:2px solid #f4f4f4;"></div>
<div class="t" style="left:3406.5px;top:1971.67px;font-size:34.5px;color:#fff;transform:scaleX(0.9450);-webkit-text-stroke:0.3px #fff;">Print</div>
<div class="b" style="left:3027px;top:2073px;width:828px;height:89.5px;background:#6168be;border-radius:16px;"></div>
<div class="t" style="left:3325.5px;top:2099.75px;font-size:35px;color:#fff;transform:scaleX(0.9518);-webkit-text-stroke:0.3px #fff;">Go To Payment</div>
</body></html>
